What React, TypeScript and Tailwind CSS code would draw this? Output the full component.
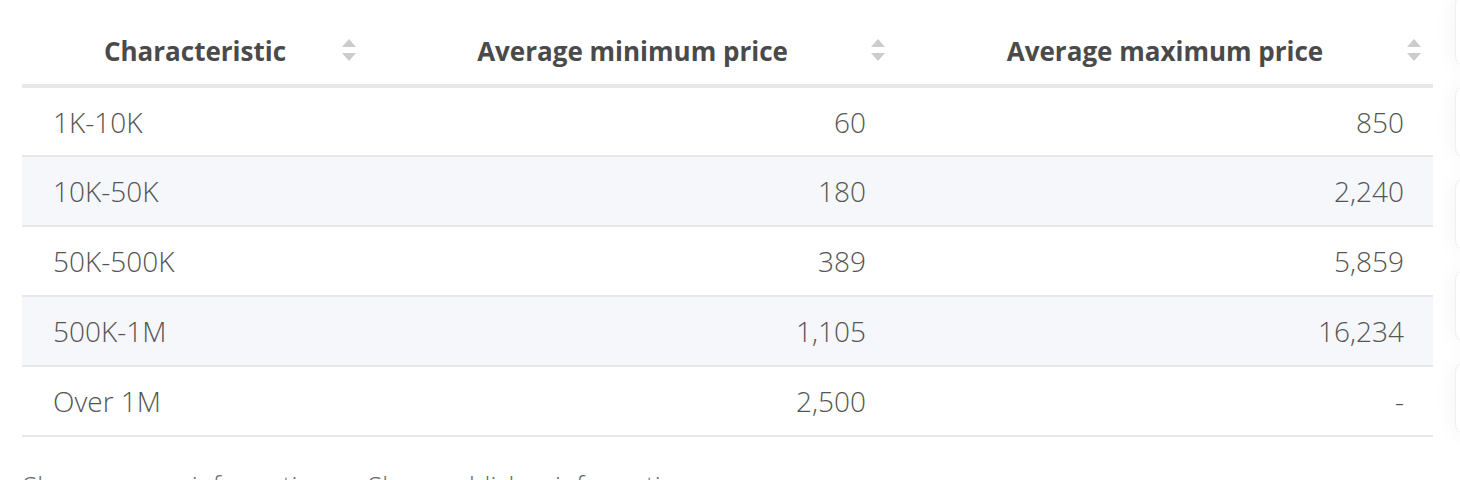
import { ReactNode } from 'react';

type Row = { label: string; min: string; max: string };

const rows: Row[] = [
  { label: '1K-10K', min: '60', max: '850' },
  { label: '10K-50K', min: '180', max: '2,240' },
  { label: '50K-500K', min: '389', max: '5,859' },
  { label: '500K-1M', min: '1,105', max: '16,234' },
  { label: 'Over 1M', min: '2,500', max: '-' },
];

function SortIcon() {
  return (
    <svg width="14" height="23" viewBox="0 0 14 23" className="absolute right-[12px] top-[39px]">
      <path d="M7 0 L14 8 L0 8 Z" fill="#cccccc" />
      <path d="M0 14 L14 14 L7 22 Z" fill="#cccccc" />
    </svg>
  );
}

function HeadCell({ children }: { children: ReactNode }) {
  return (
    <th className="relative h-[86px] pt-[18px] text-center text-[26px] font-bold text-[#4a4a4a]">
      {children}
      <SortIcon />
    </th>
  );
}

export default function App() {
  return (
    <div
      className="flex h-[480px] w-[1460px] overflow-hidden bg-white text-[28px]"
      style={{ fontFamily: '"Open Sans", "Liberation Sans", sans-serif' }}
    >
      <div className="ml-[22px] w-[1411px] shrink-0">
        <table className="w-full table-fixed border-collapse">
          <colgroup>
            <col className="w-[346px]" />
            <col className="w-[529px]" />
            <col className="w-[536px]" />
          </colgroup>
          <thead>
            <tr className="border-b-[4px] border-[#e8e8e8]">
              <HeadCell>Characteristic</HeadCell>
              <HeadCell>Average minimum price</HeadCell>
              <HeadCell>Average maximum price</HeadCell>
            </tr>
          </thead>
          <tbody className="font-light text-[#555555]">
            {rows.map((row, i) => (
              <tr
                key={row.label}
                className={`h-[70px] border-b-2 border-[#e8e8e8] ${i % 2 === 1 ? 'bg-[#f5f7fb]' : 'bg-white'}`}
              >
                <td className="pl-[31px] text-left">{row.label}</td>
                <td className="pr-[31px] text-right">{row.min}</td>
                <td className="pr-[29px] text-right">{row.max}</td>
              </tr>
            ))}
          </tbody>
        </table>
        <div className="mt-[29px] flex gap-[40px] pl-[1px] text-[26px] font-light text-[#666666]">
          <span>Show sources information</span>
          <span>Show publisher information</span>
        </div>
      </div>

      <div className="ml-[22px] mt-[-6px] flex w-[200px] shrink-0 flex-col gap-[20px]">
        {[0, 1, 2, 3, 4].map((n) => (
          <div
            key={n}
            className="h-[72px] rounded-[10px] border border-[#f0f0f0] bg-white shadow-[0_0_24px_rgba(0,0,0,0.05)]"
          />
        ))}
      </div>
    </div>
  );
}
